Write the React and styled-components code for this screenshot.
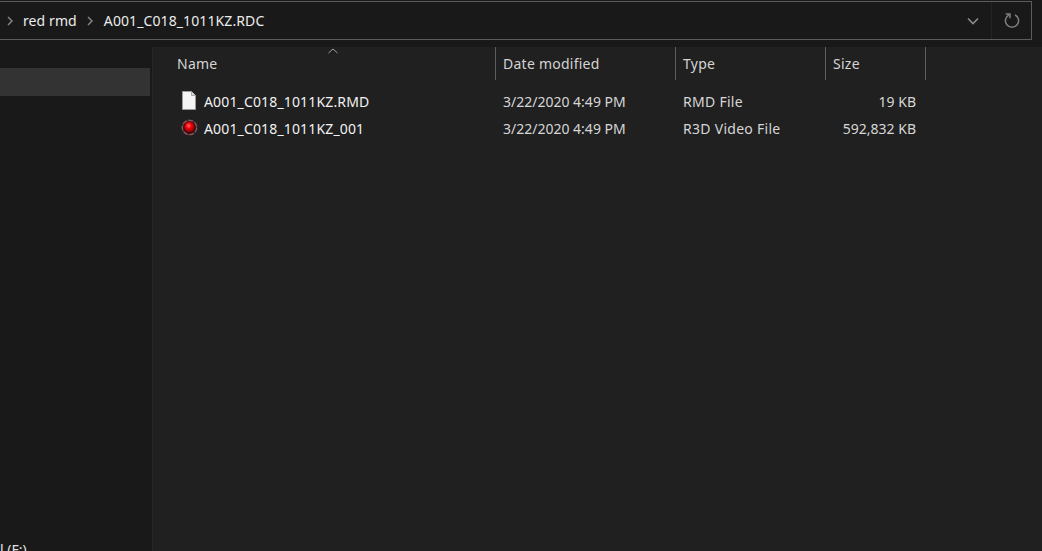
import React from 'react';
import styled, {createGlobalStyle} from 'styled-components';

const Global = createGlobalStyle`
  html, body { margin: 0; padding: 0; background: #191919; }
  body { font-family: "Noto Sans", "Open Sans", sans-serif; }
`;
const Page = styled.div`
  width: 1042px;
  height: 551px;
  overflow: hidden;
  display: flex;
  flex-direction: column;
  background: #191919;
`;
const TopBar = styled.div`
  height: 47px;
  flex: none;
  padding: 1px 10px 0 0;
  box-sizing: border-box;
`;
const AddressBox = styled.div`
  height: 39px;
  box-sizing: border-box;
  border: 1px solid #5c5c5c;
  border-left: none;
  display: flex;
  align-items: center;
  color: #ececec;
  font-size: 14px;
`;
const Crumbs = styled.div`
  flex: 1;
  display: flex;
  align-items: center;
  padding-left: 7px;
`;
const Crumb = styled.span`
  letter-spacing: 0.1px;
  margin-top: -1px;
`;
const Sep = styled.span`
  display: flex;
  width: 6px;
  margin: ${p => (p.first ? '0 10px 0 0' : '0 11px 0 10px')};
`;
const DropButton = styled.div`
  width: 36px;
  display: flex;
  justify-content: center;
`;
const RefreshButton = styled.div`
  width: 39px;
  height: 37px;
  border-left: 1px solid #242424;
  display: flex;
  align-items: center;
  justify-content: center;
`;
const Body = styled.div`
  flex: 1;
  display: flex;
  min-height: 0;
`;
const Sidebar = styled.div`
  width: 150px;
  flex: none;
  padding-top: 21px;
  overflow: hidden;
`;
const NavRow = styled.div`
  height: 28px;
  background: #333333;
`;
const DriveLabel = styled.div`
  margin-top: 444px;
  font-size: 14px;
  line-height: 20px;
  color: #e0e0e0;
  white-space: nowrap;
`;
const Content = styled.div`
  flex: 1;
  margin-left: 2px;
  border-left: 1px solid #262626;
  background: #202020;
  padding-left: 16px;
  position: relative;
`;
const SortCaret = styled.svg`
  position: absolute;
  left: 175px;
  top: 1px;
`;
const Header = styled.div`
  display: grid;
  grid-template-columns: 327px 180px 150px 100px;
  height: 32px;
  margin-bottom: 8px;
`;
const HeaderCell = styled.div`
  border-right: 1px solid #5e5e5e;
  padding-left: ${p => (p.first ? '8px' : '7px')};
  font-size: 14px;
  line-height: 33px;
  color: #d4d4d4;
  letter-spacing: 0.25px;
`;
const Row = styled.div`
  display: grid;
  grid-template-columns: 327px 180px 150px 100px;
  height: 27px;
  box-sizing: border-box;
  padding-top: 1px;
  align-items: center;
  font-size: 14px;
  color: #d6d6d6;
`;
const NameCell = styled.div`
  display: flex;
  align-items: center;
  padding-left: 12px;
  color: #f2f2f2;
  letter-spacing: 0.15px;
`;
const FileIcon = styled.span`
  display: flex;
  width: 23px;
  flex: none;
  margin-top: -1px;
`;
const Cell = styled.div`
  padding-left: 7px;
  letter-spacing: ${p => p.spacing || 0}px;
`;
const SizeCell = styled.div`
  text-align: right;
  padding-right: 10px;
`;

const Chevron = ({first}) => (
    <Sep first={first}>
        <svg width="6" height="10" viewBox="0 0 6 10">
            <path d="M1 1l4 4-4 4" fill="none" stroke="#8a8a8a" strokeWidth="1.4"/>
        </svg>
    </Sep>
);
const PageIcon = () => (
    <svg width="16" height="19" viewBox="0 0 16 19">
        <path d="M1.5 0.5h9l4 4v14h-13z" fill="#f4f4f4" stroke="#9a9a9a" strokeWidth="1"/>
        <path d="M10.5 0.5v4h4" fill="#d8d8d8" stroke="#a8a8a8" strokeWidth="1"/>
    </svg>
);
const RedIcon = () => (
    <svg width="17" height="17" viewBox="0 0 17 17">
        <defs>
            <radialGradient id="redBall" cx="0.42" cy="0.38" r="0.6">
                <stop offset="0" stopColor="#ff6a6a"/>
                <stop offset="0.45" stopColor="#f4000a"/>
                <stop offset="1" stopColor="#8a0006"/>
            </radialGradient>
        </defs>
        <circle cx="8.5" cy="8.5" r="8.2" fill="#3a2426"/>
        <circle cx="8.5" cy="8.5" r="7.2" fill="none" stroke="#8b5a5e" strokeWidth="1.3" strokeDasharray="5 1.5"/>
        <circle cx="8.5" cy="8.5" r="6" fill="#2a0a0c"/>
        <circle cx="8.5" cy="8" r="5.2" fill="url(#redBall)"/>
    </svg>
);

const files = [
    {name: 'A001_C018_1011KZ.RMD', date: '3/22/2020 4:49 PM', type: 'RMD File', size: '19 KB', icon: <PageIcon/>},
    {name: 'A001_C018_1011KZ_001', date: '3/22/2020 4:49 PM', type: 'R3D Video File', size: '592,832 KB', icon: <RedIcon/>},
];

const App = () => (
    <Page>
        <Global/>
        <TopBar>
            <AddressBox>
                <Crumbs>
                    <Chevron first/>
                    <Crumb>red rmd</Crumb>
                    <Chevron/>
                    <Crumb>A001_C018_1011KZ.RDC</Crumb>
                </Crumbs>
                <DropButton>
                    <svg width="12" height="8" viewBox="0 0 12 8">
                        <path d="M1 1.5l5 5 5-5" fill="none" stroke="#8c8c8c" strokeWidth="1.6"/>
                    </svg>
                </DropButton>
                <RefreshButton>
                    <svg width="16" height="16" viewBox="0 0 16 16">
                        <path d="M5 1.8A6.6 6.6 0 1 0 11 1.8" fill="none" stroke="#808080" strokeWidth="1.5"/>
                        <path d="M1.8 1h4.2v4.2" fill="none" stroke="#808080" strokeWidth="1.5"/>
                    </svg>
                </RefreshButton>
            </AddressBox>
        </TopBar>
        <Body>
            <Sidebar>
                <NavRow/>
                <DriveLabel>l (F:)</DriveLabel>
            </Sidebar>
            <Content>
                <SortCaret width="10" height="6" viewBox="0 0 10 6">
                    <path d="M0.5 5l4.5-4 4.5 4" fill="none" stroke="#a0a0a0" strokeWidth="1"/>
                </SortCaret>
                <Header>
                    <HeaderCell first>Name</HeaderCell>
                    <HeaderCell>Date modified</HeaderCell>
                    <HeaderCell>Type</HeaderCell>
                    <HeaderCell>Size</HeaderCell>
                </Header>
                {files.map(file => (
                    <Row key={file.name}>
                        <NameCell>
                            <FileIcon>{file.icon}</FileIcon>
                            {file.name}
                        </NameCell>
                        <Cell>{file.date}</Cell>
                        <Cell spacing={0.28}>{file.type}</Cell>
                        <SizeCell>{file.size}</SizeCell>
                    </Row>
                ))}
            </Content>
        </Body>
    </Page>
);

export default App;
